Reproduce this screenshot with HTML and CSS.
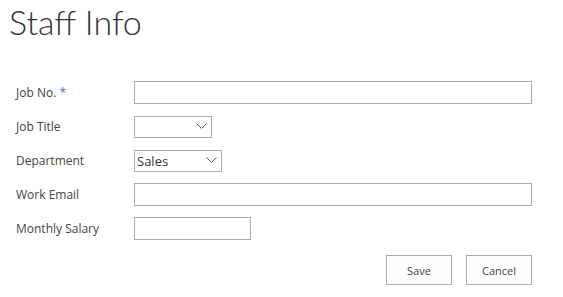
FILE: index.html
```html
<!DOCTYPE html>
<html lang="en">
<head>
    <meta charset="UTF-8">
    <title>Staff Info</title>
    <link rel="stylesheet" href="styles.css">
</head>
<body>

<h1 class="title">Staff Info</h1>

<div class="form">
    <div class="row">
        <label class="label">Job No. <span class="req">*</span></label>
        <input class="field wide" type="text">
    </div>
    <div class="row">
        <label class="label">Job Title</label>
        <span class="select-wrap short">
            <select class="field select"><option></option></select>
            <svg class="chev" width="11" height="6" viewBox="0 0 11 6"><path d="M0.5 0.5 L5.5 5.5 L10.5 0.5" fill="none" stroke="#555" stroke-width="1"/></svg>
        </span>
    </div>
    <div class="row">
        <label class="label">Department</label>
        <span class="select-wrap dept">
            <select class="field select"><option>Sales</option></select>
            <svg class="chev" width="11" height="6" viewBox="0 0 11 6"><path d="M0.5 0.5 L5.5 5.5 L10.5 0.5" fill="none" stroke="#555" stroke-width="1"/></svg>
        </span>
    </div>
    <div class="row">
        <label class="label">Work Email</label>
        <input class="field wide" type="text">
    </div>
    <div class="row">
        <label class="label">Monthly Salary</label>
        <input class="field salary" type="text">
    </div>
</div>

<div class="actions">
    <button class="btn">Save</button>
    <button class="btn">Cancel</button>
</div>

</body>
</html>
```

FILE: styles.css
```css
body {
    margin: 0;
    font-family: "Open Sans", "Noto Sans", sans-serif;
    background: #fff;
    color: #444;
}

.title {
    margin: 0;
    padding: 1px 0 0 9px;
    font-family: Lato, "Open Sans", sans-serif;
    font-size: 34px;
    font-weight: 300;
    color: #333;
    line-height: 41px;
}

.form {
    padding: 33px 0 0 16px;
}

.row {
    display: flex;
    align-items: center;
    height: 34px;
}

.label {
    width: 118px;
    font-size: 12px;
    color: #444;
}

.req {
    color: #2b7bd6;
}

.field {
    box-sizing: border-box;
    height: 23px;
    border: 1px solid #ababab;
    background: #fff;
    font-family: inherit;
    font-size: 13px;
    color: #333;
    margin: 0;
}

.wide {
    width: 398px;
}

.salary {
    width: 117px;
}

.select-wrap {
    position: relative;
    display: inline-block;
}

.select {
    -webkit-appearance: none;
    appearance: none;
    height: 22px;
    width: 100%;
    padding: 0 0 0 2px;
    border-radius: 0;
    outline: none;
}

.short {
    width: 78px;
}

.dept {
    width: 88px;
}

.chev {
    position: absolute;
    right: 5px;
    top: 8px;
}

.actions {
    display: flex;
    justify-content: flex-end;
    gap: 14px;
    width: 532px;
    padding-top: 10px;
}

.btn {
    width: 66px;
    height: 30px;
    border: 1px solid #ababab;
    background: #fdfdfd;
    font-family: inherit;
    font-size: 11px;
    color: #444;
    cursor: pointer;
}
```
